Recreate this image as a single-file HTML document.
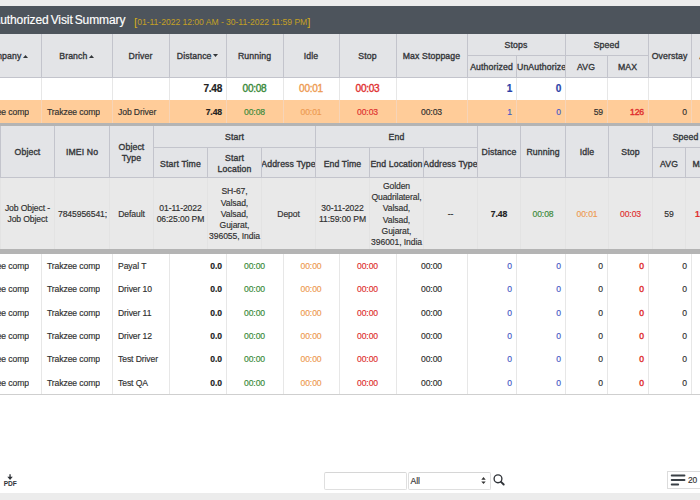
<!DOCTYPE html>
<html><head><meta charset="utf-8"><title>Visit Summary</title><style>
*{box-sizing:border-box;margin:0;padding:0}
html,body{width:700px;height:500px;overflow:hidden;background:#fff}
body{font-family:"Liberation Sans", sans-serif;font-size:8.6px;letter-spacing:-0.1px;color:#303030;-webkit-text-stroke:0.16px;position:relative}
.abs{position:absolute}
.c{position:absolute;display:flex;align-items:center;justify-content:center;text-align:center;white-space:nowrap;overflow:hidden}
.r{justify-content:flex-end;text-align:right}
.l{justify-content:flex-start;text-align:left}
.h{font-weight:normal;color:#35373a;font-size:8.7px;letter-spacing:0.12px;-webkit-text-stroke:0.35px #35373a}
.vl{position:absolute;width:1px}
.hl{position:absolute;height:1px}
.g{color:#3a8a3a} .o{color:#ee9b52} .rd{color:#e03030} .b{color:#2a3fa8}
.wrap{white-space:nowrap}
</style></head><body>
<div class="abs" style="left:0px;top:0px;width:700px;height:6px;background:#ececec;"></div>
<div class="abs" style="left:0px;top:6px;width:700px;height:28px;background:#4d545c;"></div>
<div id="title" class="abs" style="left:-14.3px;top:7.2px;height:27px;line-height:27px;color:#fff;font-size:12px;word-spacing:-1.2px;white-space:nowrap">nAuthorized Visit Summary</div>
<div id="date" class="abs" style="left:134px;top:8px;height:27px;line-height:27px;color:#c4a024;font-size:8.6px;letter-spacing:-0.035px;-webkit-text-stroke:0;white-space:nowrap"><span style="font-size:11.5px;color:#d4ac1c;position:relative;top:0.5px">[</span>01-11-2022 12:00 AM - 30-11-2022 11:59 PM<span style="font-size:11.5px;color:#d4ac1c;position:relative;top:0.5px">]</span></div>
<div class="abs" style="left:0px;top:34px;width:700px;height:43px;background:#e3e4e7;"></div>
<div class="c h" style="left:-30px;top:34px;width:71px;height:43px;"><div>Company<svg width="5" height="3" viewBox="0 0 5 3" style="margin-left:1.3px;position:relative;top:-1px"><path d="M2.5 0L5 3H0z" fill="#33363a"/></svg></div></div>
<div class="c h" style="left:41px;top:34px;width:71px;height:43px;"><div>Branch<svg width="5" height="3" viewBox="0 0 5 3" style="margin-left:1.3px;position:relative;top:-1px"><path d="M2.5 0L5 3H0z" fill="#33363a"/></svg></div></div>
<div class="c h" style="left:112px;top:34px;width:57px;height:43px;"><div>Driver</div></div>
<div class="c h" style="left:169px;top:34px;width:57px;height:43px;"><div>Distance<svg width="5" height="3" viewBox="0 0 5 3" style="margin-left:1.6px;position:relative;top:-1.6px"><path d="M0 0H5L2.5 3z" fill="#33363a"/></svg></div></div>
<div class="c h" style="left:226px;top:34px;width:57px;height:43px;"><div>Running</div></div>
<div class="c h" style="left:283px;top:34px;width:56px;height:43px;"><div>Idle</div></div>
<div class="c h" style="left:339px;top:34px;width:57px;height:43px;"><div>Stop</div></div>
<div class="c h" style="left:396px;top:34px;width:71px;height:43px;"><div>Max Stoppage</div></div>
<div class="c h" style="left:467px;top:34px;width:98px;height:21px;"><div>Stops</div></div>
<div class="c h" style="left:467px;top:56px;width:49px;height:21px;"><div>Authorized</div></div>
<div class="c h l" style="left:516px;top:56px;width:49px;height:21px;padding-left:1px"><div>UnAuthorized</div></div>
<div class="c h" style="left:565px;top:34px;width:83px;height:21px;"><div>Speed</div></div>
<div class="c h" style="left:565px;top:56px;width:42px;height:21px;"><div>AVG</div></div>
<div class="c h" style="left:607px;top:56px;width:41px;height:21px;"><div>MAX</div></div>
<div class="c h" style="left:648px;top:34px;width:43px;height:43px;"><div>Overstay</div></div>
<div class="c h l" style="left:691px;top:34px;width:49px;height:43px;padding-left:8.5px"><div>Alert</div></div>
<div class="vl" style="left:41px;top:34px;height:43px;background:#c3c4cc"></div>
<div class="vl" style="left:112px;top:34px;height:43px;background:#c3c4cc"></div>
<div class="vl" style="left:169px;top:34px;height:43px;background:#c3c4cc"></div>
<div class="vl" style="left:226px;top:34px;height:43px;background:#c3c4cc"></div>
<div class="vl" style="left:283px;top:34px;height:43px;background:#c3c4cc"></div>
<div class="vl" style="left:339px;top:34px;height:43px;background:#c3c4cc"></div>
<div class="vl" style="left:396px;top:34px;height:43px;background:#c3c4cc"></div>
<div class="vl" style="left:467px;top:34px;height:43px;background:#c3c4cc"></div>
<div class="vl" style="left:565px;top:34px;height:43px;background:#c3c4cc"></div>
<div class="vl" style="left:648px;top:34px;height:43px;background:#c3c4cc"></div>
<div class="vl" style="left:691px;top:34px;height:43px;background:#c3c4cc"></div>
<div class="vl" style="left:516px;top:56px;height:21px;background:#c3c4cc"></div>
<div class="vl" style="left:607px;top:56px;height:21px;background:#c3c4cc"></div>
<div class="hl" style="left:467px;top:55px;width:181px;background:#c3c4cc"></div>
<div class="hl" style="left:0px;top:77px;width:700px;background:#c3c4cc"></div>
<div class="vl" style="left:41px;top:78px;height:22px;background:#e7e7e7"></div>
<div class="vl" style="left:112px;top:78px;height:22px;background:#e7e7e7"></div>
<div class="vl" style="left:169px;top:78px;height:22px;background:#e7e7e7"></div>
<div class="vl" style="left:226px;top:78px;height:22px;background:#e7e7e7"></div>
<div class="vl" style="left:283px;top:78px;height:22px;background:#e7e7e7"></div>
<div class="vl" style="left:339px;top:78px;height:22px;background:#e7e7e7"></div>
<div class="vl" style="left:396px;top:78px;height:22px;background:#e7e7e7"></div>
<div class="vl" style="left:467px;top:78px;height:22px;background:#e7e7e7"></div>
<div class="vl" style="left:516px;top:78px;height:22px;background:#e7e7e7"></div>
<div class="vl" style="left:565px;top:78px;height:22px;background:#e7e7e7"></div>
<div class="vl" style="left:607px;top:78px;height:22px;background:#e7e7e7"></div>
<div class="vl" style="left:648px;top:78px;height:22px;background:#e7e7e7"></div>
<div class="vl" style="left:691px;top:78px;height:22px;background:#e7e7e7"></div>
<div class="c r" style="left:169px;top:78px;width:57px;height:22px;font-size:10.1px;letter-spacing:-0.3px;font-weight:bold;padding-right:4px;padding-bottom:0.5px;color:#222"><div>7.48</div></div>
<div class="c g" style="left:226px;top:78px;width:57px;height:22px;font-size:10.1px;letter-spacing:-0.3px;padding-bottom:0.5px;-webkit-text-stroke:0.36px currentColor"><div>00:08</div></div>
<div class="c o" style="left:283px;top:78px;width:56px;height:22px;font-size:10.1px;letter-spacing:-0.3px;padding-bottom:0.5px;-webkit-text-stroke:0.36px currentColor"><div>00:01</div></div>
<div class="c rd" style="left:339px;top:78px;width:57px;height:22px;font-size:10.1px;letter-spacing:-0.3px;padding-bottom:0.5px;-webkit-text-stroke:0.36px currentColor"><div>00:03</div></div>
<div class="c r b" style="left:467px;top:78px;width:49px;height:22px;font-size:10.1px;letter-spacing:-0.3px;font-weight:bold;padding-right:4px;padding-bottom:0.5px"><div>1</div></div>
<div class="c r b" style="left:516px;top:78px;width:49px;height:22px;font-size:10.1px;letter-spacing:-0.3px;font-weight:bold;padding-right:4px;padding-bottom:0.5px"><div>0</div></div>
<div class="abs" style="left:0px;top:100px;width:700px;height:23px;background:#ffcc99;"></div>
<div class="vl" style="left:41px;top:100px;height:23px;background:#f6d4b8"></div>
<div class="vl" style="left:112px;top:100px;height:23px;background:#f6d4b8"></div>
<div class="vl" style="left:169px;top:100px;height:23px;background:#f6d4b8"></div>
<div class="vl" style="left:226px;top:100px;height:23px;background:#f6d4b8"></div>
<div class="vl" style="left:283px;top:100px;height:23px;background:#f6d4b8"></div>
<div class="vl" style="left:339px;top:100px;height:23px;background:#f6d4b8"></div>
<div class="vl" style="left:396px;top:100px;height:23px;background:#f6d4b8"></div>
<div class="vl" style="left:467px;top:100px;height:23px;background:#f6d4b8"></div>
<div class="vl" style="left:516px;top:100px;height:23px;background:#f6d4b8"></div>
<div class="vl" style="left:565px;top:100px;height:23px;background:#f6d4b8"></div>
<div class="vl" style="left:607px;top:100px;height:23px;background:#f6d4b8"></div>
<div class="vl" style="left:648px;top:100px;height:23px;background:#f6d4b8"></div>
<div class="vl" style="left:691px;top:100px;height:23px;background:#f6d4b8"></div>
<div class="c l" style="left:-30px;top:100px;width:59.3px;height:23px;padding-left:6px"><div>Trakzee company</div></div>
<div class="c l" style="left:41px;top:100px;width:59.3px;height:23px;padding-left:6px"><div>Trakzee company</div></div>
<div class="c l" style="left:112px;top:100px;width:46.6px;height:23px;padding-left:6px"><div>Job Driver</div></div>
<div class="c r" style="left:169px;top:100px;width:57px;height:23px;padding-right:4px;font-weight:bold;color:#222"><div>7.48</div></div>
<div class="c g" style="left:226px;top:100px;width:57px;height:23px;"><div>00:08</div></div>
<div class="c o" style="left:283px;top:100px;width:56px;height:23px;"><div>00:01</div></div>
<div class="c rd" style="left:339px;top:100px;width:57px;height:23px;"><div>00:03</div></div>
<div class="c " style="left:396px;top:100px;width:71px;height:23px;"><div>00:03</div></div>
<div class="c r b" style="left:467px;top:100px;width:49px;height:23px;padding-right:4px;color:#4459c6"><div>1</div></div>
<div class="c r b" style="left:516px;top:100px;width:49px;height:23px;padding-right:4px;color:#4459c6"><div>0</div></div>
<div class="c r" style="left:565px;top:100px;width:42px;height:23px;padding-right:4px"><div>59</div></div>
<div class="c r rd" style="left:607px;top:100px;width:41px;height:23px;padding-right:4px;-webkit-text-stroke:0.4px"><div>126</div></div>
<div class="c r" style="left:648px;top:100px;width:43px;height:23px;padding-right:4px"><div>0</div></div>
<div class="abs" style="left:0px;top:123px;width:700px;height:131px;background:#b4b4b4;"></div>
<div class="abs" style="left:0px;top:126px;width:700px;height:52px;background:#e3e4e7;"></div>
<div class="abs" style="left:0px;top:178px;width:700px;height:71px;background:#e9e9e9;"></div>
<div class="vl" style="left:0px;top:126px;height:52px;background:#c3c4cc"></div>
<div class="vl" style="left:54px;top:126px;height:52px;background:#c3c4cc"></div>
<div class="vl" style="left:109px;top:126px;height:52px;background:#c3c4cc"></div>
<div class="vl" style="left:153px;top:126px;height:52px;background:#c3c4cc"></div>
<div class="vl" style="left:315px;top:126px;height:52px;background:#c3c4cc"></div>
<div class="vl" style="left:477px;top:126px;height:52px;background:#c3c4cc"></div>
<div class="vl" style="left:520px;top:126px;height:52px;background:#c3c4cc"></div>
<div class="vl" style="left:565px;top:126px;height:52px;background:#c3c4cc"></div>
<div class="vl" style="left:608px;top:126px;height:52px;background:#c3c4cc"></div>
<div class="vl" style="left:652px;top:126px;height:52px;background:#c3c4cc"></div>
<div class="vl" style="left:207px;top:148px;height:30px;background:#c3c4cc"></div>
<div class="vl" style="left:261px;top:148px;height:30px;background:#c3c4cc"></div>
<div class="vl" style="left:369px;top:148px;height:30px;background:#c3c4cc"></div>
<div class="vl" style="left:423px;top:148px;height:30px;background:#c3c4cc"></div>
<div class="vl" style="left:685px;top:148px;height:30px;background:#c3c4cc"></div>
<div class="hl" style="left:153px;top:147px;width:324px;background:#c3c4cc"></div>
<div class="hl" style="left:652px;top:147px;width:48px;background:#c3c4cc"></div>
<div class="hl" style="left:0px;top:177px;width:700px;background:#c3c4cc"></div>
<div class="c h" style="left:1px;top:126px;width:53px;height:51px;padding-top:1px"><div>Object</div></div>
<div class="c h" style="left:55px;top:126px;width:54px;height:51px;padding-top:1px"><div>IMEI No</div></div>
<div class="c h wrap" style="left:110px;top:126px;width:43px;height:51px;line-height:11px;padding-top:3px"><div>Object<br>Type</div></div>
<div class="c h" style="left:154px;top:126px;width:161px;height:21px;padding-top:1px"><div>Start</div></div>
<div class="c h" style="left:154px;top:148px;width:53px;height:29px;padding-top:2px"><div>Start Time</div></div>
<div class="c h wrap" style="left:208px;top:148px;width:53px;height:29px;line-height:11px;padding-top:3px"><div>Start<br>Location</div></div>
<div class="c h" style="left:262px;top:148px;width:53px;height:29px;padding-top:2px"><div>Address Type</div></div>
<div class="c h" style="left:316px;top:126px;width:161px;height:21px;padding-top:1px"><div>End</div></div>
<div class="c h" style="left:316px;top:148px;width:53px;height:29px;padding-top:2px"><div>End Time</div></div>
<div class="c h" style="left:370px;top:148px;width:53px;height:29px;padding-top:2px"><div>End Location</div></div>
<div class="c h" style="left:424px;top:148px;width:53px;height:29px;padding-top:2px"><div>Address Type</div></div>
<div class="c h" style="left:478px;top:126px;width:42px;height:51px;padding-top:1px"><div>Distance</div></div>
<div class="c h" style="left:521px;top:126px;width:44px;height:51px;padding-top:1px"><div>Running</div></div>
<div class="c h" style="left:566px;top:126px;width:42px;height:51px;padding-top:1px"><div>Idle</div></div>
<div class="c h" style="left:609px;top:126px;width:43px;height:51px;padding-top:1px"><div>Stop</div></div>
<div class="c h" style="left:653px;top:126px;width:65px;height:21px;padding-top:1px"><div>Speed</div></div>
<div class="c h" style="left:653px;top:148px;width:32px;height:29px;padding-top:2px"><div>AVG</div></div>
<div class="c h" style="left:686px;top:148px;width:32px;height:29px;padding-top:2px"><div>MAX</div></div>
<div class="vl" style="left:54px;top:178px;height:71px;background:#e3e3e3"></div>
<div class="vl" style="left:109px;top:178px;height:71px;background:#e3e3e3"></div>
<div class="vl" style="left:153px;top:178px;height:71px;background:#e3e3e3"></div>
<div class="vl" style="left:207px;top:178px;height:71px;background:#e3e3e3"></div>
<div class="vl" style="left:261px;top:178px;height:71px;background:#e3e3e3"></div>
<div class="vl" style="left:315px;top:178px;height:71px;background:#e3e3e3"></div>
<div class="vl" style="left:369px;top:178px;height:71px;background:#e3e3e3"></div>
<div class="vl" style="left:423px;top:178px;height:71px;background:#e3e3e3"></div>
<div class="vl" style="left:477px;top:178px;height:71px;background:#e3e3e3"></div>
<div class="vl" style="left:520px;top:178px;height:71px;background:#e3e3e3"></div>
<div class="vl" style="left:565px;top:178px;height:71px;background:#e3e3e3"></div>
<div class="vl" style="left:608px;top:178px;height:71px;background:#e3e3e3"></div>
<div class="vl" style="left:652px;top:178px;height:71px;background:#e3e3e3"></div>
<div class="vl" style="left:685px;top:178px;height:71px;background:#e3e3e3"></div>
<div class="vl" style="left:0px;top:178px;height:71px;background:#e3e3e3"></div>
<div class="c wrap" style="left:1px;top:178px;width:53px;height:71px;line-height:11px;padding-top:1px"><div>Job Object -<br>Job Object</div></div>
<div class="c l" style="left:55px;top:178px;width:52px;height:71px;padding-left:3px"><div>7845956541;</div></div>
<div class="c " style="left:110px;top:178px;width:43px;height:71px;"><div>Default</div></div>
<div class="c wrap" style="left:154px;top:178px;width:53px;height:71px;line-height:11px;padding-top:1px"><div>01-11-2022<br>06:25:00 PM</div></div>
<div class="c wrap" style="left:208px;top:178px;width:53px;height:71px;line-height:11.25px;padding-top:2px"><div>SH-67,<br>Valsad,<br>Valsad,<br>Gujarat,<br>396055, India</div></div>
<div class="c " style="left:262px;top:178px;width:53px;height:71px;"><div>Depot</div></div>
<div class="c wrap" style="left:316px;top:178px;width:53px;height:71px;line-height:11px;padding-top:1px"><div>30-11-2022<br>11:59:00 PM</div></div>
<div class="c wrap" style="left:370px;top:178px;width:53px;height:71px;line-height:11.25px;padding-top:2px"><div>Golden<br>Quadrilateral,<br>Valsad,<br>Valsad,<br>Gujarat,<br>396001, India</div></div>
<div class="c " style="left:424px;top:178px;width:53px;height:71px;"><div>--</div></div>
<div class="c " style="left:478px;top:178px;width:42px;height:71px;font-weight:bold;color:#222"><div>7.48</div></div>
<div class="c g" style="left:521px;top:178px;width:44px;height:71px;"><div>00:08</div></div>
<div class="c o" style="left:566px;top:178px;width:42px;height:71px;"><div>00:01</div></div>
<div class="c rd" style="left:609px;top:178px;width:43px;height:71px;"><div>00:03</div></div>
<div class="c " style="left:653px;top:178px;width:32px;height:71px;"><div>59</div></div>
<div class="c rd" style="left:686px;top:178px;width:32px;height:71px;font-weight:bold"><div>126</div></div>
<div class="vl" style="left:41px;top:254px;height:141px;background:#e7e7e7"></div>
<div class="vl" style="left:112px;top:254px;height:141px;background:#e7e7e7"></div>
<div class="vl" style="left:169px;top:254px;height:141px;background:#e7e7e7"></div>
<div class="vl" style="left:226px;top:254px;height:141px;background:#e7e7e7"></div>
<div class="vl" style="left:283px;top:254px;height:141px;background:#e7e7e7"></div>
<div class="vl" style="left:339px;top:254px;height:141px;background:#e7e7e7"></div>
<div class="vl" style="left:396px;top:254px;height:141px;background:#e7e7e7"></div>
<div class="vl" style="left:467px;top:254px;height:141px;background:#e7e7e7"></div>
<div class="vl" style="left:516px;top:254px;height:141px;background:#e7e7e7"></div>
<div class="vl" style="left:565px;top:254px;height:141px;background:#e7e7e7"></div>
<div class="vl" style="left:607px;top:254px;height:141px;background:#e7e7e7"></div>
<div class="vl" style="left:648px;top:254px;height:141px;background:#e7e7e7"></div>
<div class="vl" style="left:691px;top:254px;height:141px;background:#e7e7e7"></div>
<div class="c l" style="left:-30px;top:254.2px;width:59.3px;height:23.4px;padding-left:6px"><div>Trakzee company</div></div>
<div class="c l" style="left:41px;top:254.2px;width:59.3px;height:23.4px;padding-left:6px"><div>Trakzee company</div></div>
<div class="c l" style="left:112px;top:254.2px;width:46.6px;height:23.4px;padding-left:6px"><div>Payal T</div></div>
<div class="c r" style="left:169px;top:254.2px;width:57px;height:23.4px;padding-right:4px;font-weight:bold;color:#222"><div>0.0</div></div>
<div class="c g" style="left:226px;top:254.2px;width:57px;height:23.4px;"><div>00:00</div></div>
<div class="c o" style="left:283px;top:254.2px;width:56px;height:23.4px;"><div>00:00</div></div>
<div class="c rd" style="left:339px;top:254.2px;width:57px;height:23.4px;"><div>00:00</div></div>
<div class="c " style="left:396px;top:254.2px;width:71px;height:23.4px;"><div>00:00</div></div>
<div class="c r b" style="left:467px;top:254.2px;width:49px;height:23.4px;padding-right:4px;color:#4459c6"><div>0</div></div>
<div class="c r b" style="left:516px;top:254.2px;width:49px;height:23.4px;padding-right:4px;color:#4459c6"><div>0</div></div>
<div class="c r" style="left:565px;top:254.2px;width:42px;height:23.4px;padding-right:4px"><div>0</div></div>
<div class="c r rd" style="left:607px;top:254.2px;width:41px;height:23.4px;padding-right:4px;-webkit-text-stroke:0.4px"><div>0</div></div>
<div class="c r" style="left:648px;top:254.2px;width:43px;height:23.4px;padding-right:4px"><div>0</div></div>
<div class="c l" style="left:-30px;top:277.6px;width:59.3px;height:23.4px;padding-left:6px"><div>Trakzee company</div></div>
<div class="c l" style="left:41px;top:277.6px;width:59.3px;height:23.4px;padding-left:6px"><div>Trakzee company</div></div>
<div class="c l" style="left:112px;top:277.6px;width:46.6px;height:23.4px;padding-left:6px"><div>Driver 10</div></div>
<div class="c r" style="left:169px;top:277.6px;width:57px;height:23.4px;padding-right:4px;font-weight:bold;color:#222"><div>0.0</div></div>
<div class="c g" style="left:226px;top:277.6px;width:57px;height:23.4px;"><div>00:00</div></div>
<div class="c o" style="left:283px;top:277.6px;width:56px;height:23.4px;"><div>00:00</div></div>
<div class="c rd" style="left:339px;top:277.6px;width:57px;height:23.4px;"><div>00:00</div></div>
<div class="c " style="left:396px;top:277.6px;width:71px;height:23.4px;"><div>00:00</div></div>
<div class="c r b" style="left:467px;top:277.6px;width:49px;height:23.4px;padding-right:4px;color:#4459c6"><div>0</div></div>
<div class="c r b" style="left:516px;top:277.6px;width:49px;height:23.4px;padding-right:4px;color:#4459c6"><div>0</div></div>
<div class="c r" style="left:565px;top:277.6px;width:42px;height:23.4px;padding-right:4px"><div>0</div></div>
<div class="c r rd" style="left:607px;top:277.6px;width:41px;height:23.4px;padding-right:4px;-webkit-text-stroke:0.4px"><div>0</div></div>
<div class="c r" style="left:648px;top:277.6px;width:43px;height:23.4px;padding-right:4px"><div>0</div></div>
<div class="c l" style="left:-30px;top:301.0px;width:59.3px;height:23.4px;padding-left:6px"><div>Trakzee company</div></div>
<div class="c l" style="left:41px;top:301.0px;width:59.3px;height:23.4px;padding-left:6px"><div>Trakzee company</div></div>
<div class="c l" style="left:112px;top:301.0px;width:46.6px;height:23.4px;padding-left:6px"><div>Driver 11</div></div>
<div class="c r" style="left:169px;top:301.0px;width:57px;height:23.4px;padding-right:4px;font-weight:bold;color:#222"><div>0.0</div></div>
<div class="c g" style="left:226px;top:301.0px;width:57px;height:23.4px;"><div>00:00</div></div>
<div class="c o" style="left:283px;top:301.0px;width:56px;height:23.4px;"><div>00:00</div></div>
<div class="c rd" style="left:339px;top:301.0px;width:57px;height:23.4px;"><div>00:00</div></div>
<div class="c " style="left:396px;top:301.0px;width:71px;height:23.4px;"><div>00:00</div></div>
<div class="c r b" style="left:467px;top:301.0px;width:49px;height:23.4px;padding-right:4px;color:#4459c6"><div>0</div></div>
<div class="c r b" style="left:516px;top:301.0px;width:49px;height:23.4px;padding-right:4px;color:#4459c6"><div>0</div></div>
<div class="c r" style="left:565px;top:301.0px;width:42px;height:23.4px;padding-right:4px"><div>0</div></div>
<div class="c r rd" style="left:607px;top:301.0px;width:41px;height:23.4px;padding-right:4px;-webkit-text-stroke:0.4px"><div>0</div></div>
<div class="c r" style="left:648px;top:301.0px;width:43px;height:23.4px;padding-right:4px"><div>0</div></div>
<div class="c l" style="left:-30px;top:324.4px;width:59.3px;height:23.4px;padding-left:6px"><div>Trakzee company</div></div>
<div class="c l" style="left:41px;top:324.4px;width:59.3px;height:23.4px;padding-left:6px"><div>Trakzee company</div></div>
<div class="c l" style="left:112px;top:324.4px;width:46.6px;height:23.4px;padding-left:6px"><div>Driver 12</div></div>
<div class="c r" style="left:169px;top:324.4px;width:57px;height:23.4px;padding-right:4px;font-weight:bold;color:#222"><div>0.0</div></div>
<div class="c g" style="left:226px;top:324.4px;width:57px;height:23.4px;"><div>00:00</div></div>
<div class="c o" style="left:283px;top:324.4px;width:56px;height:23.4px;"><div>00:00</div></div>
<div class="c rd" style="left:339px;top:324.4px;width:57px;height:23.4px;"><div>00:00</div></div>
<div class="c " style="left:396px;top:324.4px;width:71px;height:23.4px;"><div>00:00</div></div>
<div class="c r b" style="left:467px;top:324.4px;width:49px;height:23.4px;padding-right:4px;color:#4459c6"><div>0</div></div>
<div class="c r b" style="left:516px;top:324.4px;width:49px;height:23.4px;padding-right:4px;color:#4459c6"><div>0</div></div>
<div class="c r" style="left:565px;top:324.4px;width:42px;height:23.4px;padding-right:4px"><div>0</div></div>
<div class="c r rd" style="left:607px;top:324.4px;width:41px;height:23.4px;padding-right:4px;-webkit-text-stroke:0.4px"><div>0</div></div>
<div class="c r" style="left:648px;top:324.4px;width:43px;height:23.4px;padding-right:4px"><div>0</div></div>
<div class="c l" style="left:-30px;top:347.8px;width:59.3px;height:23.4px;padding-left:6px"><div>Trakzee company</div></div>
<div class="c l" style="left:41px;top:347.8px;width:59.3px;height:23.4px;padding-left:6px"><div>Trakzee company</div></div>
<div class="c l" style="left:112px;top:347.8px;width:46.6px;height:23.4px;padding-left:6px"><div>Test Driver</div></div>
<div class="c r" style="left:169px;top:347.8px;width:57px;height:23.4px;padding-right:4px;font-weight:bold;color:#222"><div>0.0</div></div>
<div class="c g" style="left:226px;top:347.8px;width:57px;height:23.4px;"><div>00:00</div></div>
<div class="c o" style="left:283px;top:347.8px;width:56px;height:23.4px;"><div>00:00</div></div>
<div class="c rd" style="left:339px;top:347.8px;width:57px;height:23.4px;"><div>00:00</div></div>
<div class="c " style="left:396px;top:347.8px;width:71px;height:23.4px;"><div>00:00</div></div>
<div class="c r b" style="left:467px;top:347.8px;width:49px;height:23.4px;padding-right:4px;color:#4459c6"><div>0</div></div>
<div class="c r b" style="left:516px;top:347.8px;width:49px;height:23.4px;padding-right:4px;color:#4459c6"><div>0</div></div>
<div class="c r" style="left:565px;top:347.8px;width:42px;height:23.4px;padding-right:4px"><div>0</div></div>
<div class="c r rd" style="left:607px;top:347.8px;width:41px;height:23.4px;padding-right:4px;-webkit-text-stroke:0.4px"><div>0</div></div>
<div class="c r" style="left:648px;top:347.8px;width:43px;height:23.4px;padding-right:4px"><div>0</div></div>
<div class="c l" style="left:-30px;top:371.2px;width:59.3px;height:23.4px;padding-left:6px"><div>Trakzee company</div></div>
<div class="c l" style="left:41px;top:371.2px;width:59.3px;height:23.4px;padding-left:6px"><div>Trakzee company</div></div>
<div class="c l" style="left:112px;top:371.2px;width:46.6px;height:23.4px;padding-left:6px"><div>Test QA</div></div>
<div class="c r" style="left:169px;top:371.2px;width:57px;height:23.4px;padding-right:4px;font-weight:bold;color:#222"><div>0.0</div></div>
<div class="c g" style="left:226px;top:371.2px;width:57px;height:23.4px;"><div>00:00</div></div>
<div class="c o" style="left:283px;top:371.2px;width:56px;height:23.4px;"><div>00:00</div></div>
<div class="c rd" style="left:339px;top:371.2px;width:57px;height:23.4px;"><div>00:00</div></div>
<div class="c " style="left:396px;top:371.2px;width:71px;height:23.4px;"><div>00:00</div></div>
<div class="c r b" style="left:467px;top:371.2px;width:49px;height:23.4px;padding-right:4px;color:#4459c6"><div>0</div></div>
<div class="c r b" style="left:516px;top:371.2px;width:49px;height:23.4px;padding-right:4px;color:#4459c6"><div>0</div></div>
<div class="c r" style="left:565px;top:371.2px;width:42px;height:23.4px;padding-right:4px"><div>0</div></div>
<div class="c r rd" style="left:607px;top:371.2px;width:41px;height:23.4px;padding-right:4px;-webkit-text-stroke:0.4px"><div>0</div></div>
<div class="c r" style="left:648px;top:371.2px;width:43px;height:23.4px;padding-right:4px"><div>0</div></div>
<div class="hl" style="left:0px;top:394px;width:700px;background:#cfcfcf"></div>
<svg class="abs" style="left:3px;top:473px" width="15" height="15" viewBox="0 0 15 15"><path d="M6.4 1.2h1.3v2.6h2.1L7.05 6.9 4.3 3.8h2.1z" fill="#2f3338"/><text x="0.8" y="13" font-family="Liberation Sans" font-weight="bold" font-size="6.6" letter-spacing="-0.1" fill="#2f3338">PDF</text></svg>
<div class="abs" style="left:324px;top:472px;width:83px;height:17.5px;background:#fff;border:1px solid #dfdfdf;border-top-color:#d6d6d6;border-radius:2px"></div>
<div class="abs" style="left:408px;top:472px;width:83px;height:17.5px;background:#fff;border:1px solid #dfdfdf;border-top-color:#d6d6d6;border-radius:2px"></div>
<div class="abs" style="left:410.5px;top:472px;height:18px;line-height:18px;font-size:8.6px;color:#333">All</div>
<svg class="abs" style="left:481px;top:476.8px" width="5" height="8" viewBox="0 0 5 8"><path d="M2.5 0.1L4.7 2.8H0.3zM2.5 7.1L0.3 4.4H4.7z" fill="#333"/></svg>
<svg class="abs" style="left:492px;top:474px" width="14" height="13" viewBox="0 0 14 13"><circle cx="6" cy="4.8" r="3.9" stroke="#2f3338" stroke-width="1.35" fill="none"/><path d="M9 7.8L11.7 10.5" stroke="#2f3338" stroke-width="1.9" stroke-linecap="round"/></svg>
<div class="abs" style="left:667px;top:471px;width:40px;height:18px;background:#fff;border:1px solid #dcdcdc"></div>
<svg class="abs" style="left:669px;top:473px" width="18" height="14" viewBox="0 0 18 14"><path d="M2.7 2.5H15.5M2.7 7H15.5M2.7 11.5H9.2" stroke="#3a4046" stroke-width="1.9" stroke-linecap="round"/></svg>
<div class="abs" style="left:688px;top:471px;height:18px;line-height:18.4px;font-size:8.4px;color:#333">20</div>
<div class="abs" style="left:0px;top:493px;width:700px;height:7px;background:#ececec;"></div>
</body></html>
